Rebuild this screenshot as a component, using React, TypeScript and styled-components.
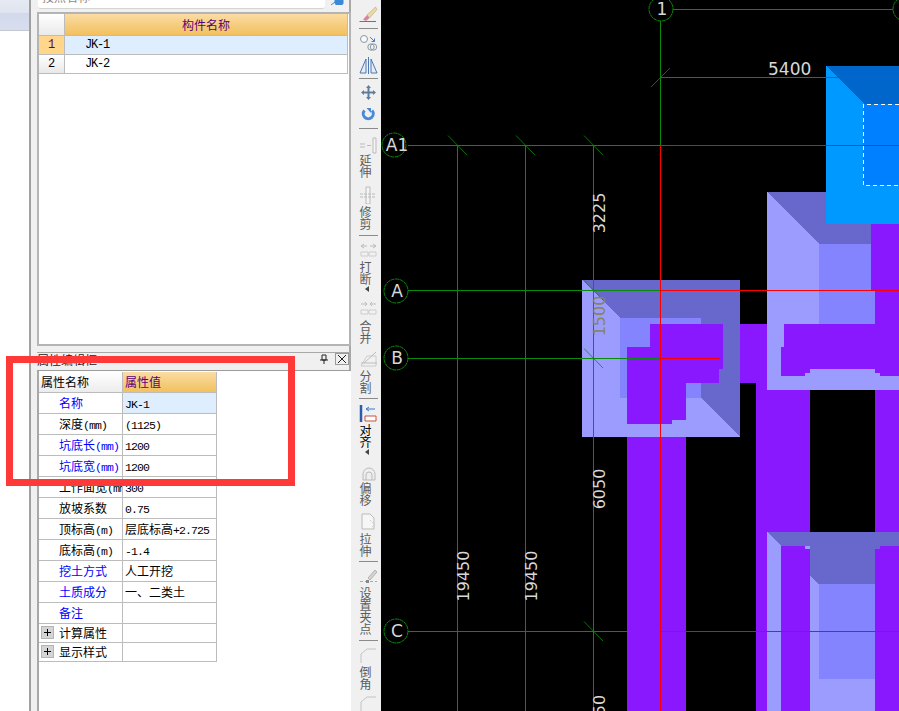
import React from "react";
import styled, { createGlobalStyle } from "styled-components";

const GlobalStyle = createGlobalStyle`
  html, body {
    margin: 0;
    padding: 0;
    background: #fff;
    overflow: hidden;
  }
  body {
    font-family: "Noto Sans CJK SC", "Liberation Sans", sans-serif;
    font-size: 12px;
  }
`;

const latin = `"Liberation Mono", "Noto Sans CJK SC", monospace`;

interface PropRow {
  name: string;
  value?: string;
  blue?: boolean;
  active?: boolean;
  expand?: boolean;
}

const propRows: PropRow[] = [
  { name: "名称", value: "JK-1", blue: true, active: true },
  { name: "深度(mm)", value: "(1125)" },
  { name: "坑底长(mm)", value: "1200", blue: true },
  { name: "坑底宽(mm)", value: "1200", blue: true },
  { name: "工作面宽(mm)", value: "300" },
  { name: "放坡系数", value: "0.75" },
  { name: "顶标高(m)", value: "层底标高+2.725" },
  { name: "底标高(m)", value: "-1.4" },
  { name: "挖土方式", value: "人工开挖", blue: true },
  { name: "土质成分", value: "一、二类土", blue: true },
  { name: "备注", value: "", blue: true },
  { name: "计算属性", expand: true },
  { name: "显示样式", expand: true },
];

function Mixed({ text }: { text: string }) {
  const parts = text.match(/[\x20-\x7e]+|[^\x20-\x7e]+/g) ?? [];
  return (
    <span>
      {parts.map((p, i) =>
        /^[\x20-\x7e]/.test(p) ? <LatinRun key={i}>{p}</LatinRun> : <span key={i}>{p}</span>
      )}
    </span>
  );
}

const Icons: Record<string, React.ReactNode> = {
  brush: (
    <>
      <path d="M16.5 1 L8 9 L10.5 12 L18 3.5 Z" fill="#ecd9a0" stroke="#b0a890" strokeWidth="0.6" />
      <path d="M4 13.5 L8 9 L10.5 12 L7 15 Z" fill="#d8859c" />
      <path d="M0.5 15.5 H17" stroke="#5a7896" strokeWidth="1" />
    </>
  ),
  circles: (
    <>
      <circle cx="5" cy="6" r="3.5" fill="#f8f8f8" stroke="#8a9aa8" />
      <circle cx="12" cy="14" r="3.2" fill="none" stroke="#8a9aa8" />
      <circle cx="14.5" cy="14" r="3.2" fill="none" stroke="#8a9aa8" />
      <path d="M11 4 L15.5 8.5 M15.5 5.5 V8.5 H12.5" stroke="#4a80c8" fill="none" />
    </>
  ),
  mirror: (
    <>
      <path d="M7 3 V17 H1 Z M12 3 V17 H18 Z" fill="#e4edf7" stroke="#4d78b0" />
      <path d="M9.5 1 V18" stroke="#4d78b0" />
    </>
  ),
  move: (
    <path
      d="M9.5 2 L12 5 H10.5 V8.5 H14 V7 L17 9.5 L14 12 V10.5 H10.5 V14 H12 L9.5 17 L7 14 H8.5 V10.5 H5 V12 L2 9.5 L5 7 V8.5 H8.5 V5 H7 Z"
      fill="#5f7e9e"
    />
  ),
  rotate: (
    <>
      <path d="M5.5 4.5 A5 5 0 1 0 13 4.5" fill="none" stroke="#4a88d8" strokeWidth="3" />
      <path d="M7.5 2 L12 2 L12 7 Z" fill="#4a88d8" />
    </>
  ),
  extend: (
    <>
      <path d="M14 2 H17 V17 H14 Z" fill="#f4f4f4" stroke="#bbb" />
      <path d="M1 8 H6 M1 11 H6 M8 9.5 H12" stroke="#bbb" />
    </>
  ),
  trim: (
    <>
      <path d="M7 1 H11 V18 H7 Z" fill="#f4f4f4" stroke="#bbb" />
      <path d="M1 8 H17 M1 11 H17" stroke="#bbb" strokeDasharray="3 1" />
    </>
  ),
  breakLine: (
    <>
      <path d="M2 5 H8 M11 5 H17 M5 3 L2 5 L5 7 M14 3 L17 5 L14 7" stroke="#bbb" fill="none" />
      <path d="M2 11 H9 V15 H2 Z M10 11 H17 V15 H10 Z" fill="#f2f2f2" stroke="#ccc" />
    </>
  ),
  merge: (
    <>
      <path d="M2 5 H8 M11 5 H17 M6 3 L8 5 L6 7 M13 3 L11 5 L13 7" stroke="#bbb" fill="none" />
      <path d="M2 11 H9 V15 H2 Z M10 11 H17 V15 H10 Z" fill="#f2f2f2" stroke="#ccc" />
    </>
  ),
  split: (
    <>
      <path d="M2 16 L8 6 H17 V16 Z" fill="#f2f2f2" stroke="#ccc" />
      <path d="M5 13 L17 2 M2 13 H18" stroke="#bbb" />
    </>
  ),
  align: (
    <>
      <path d="M2 1 V18" stroke="#2a5ca8" strokeWidth="2.5" />
      <path d="M6 12 H17 V17 H6 Z" fill="#fff" stroke="#c8503c" />
      <path d="M7 5 H16 M7 5 L10 3 M7 5 L10 7" stroke="#3a78d0" fill="none" />
    </>
  ),
  offset: (
    <>
      <path d="M4 15 V9 A6 6 0 0 1 16 9 V15 Z" fill="#eee" stroke="#bbb" />
      <path d="M7 15 V10 A3 3 0 0 1 13 10 V15" fill="none" stroke="#bbb" />
    </>
  ),
  stretch: (
    <>
      <path d="M3 2 H11 L15 6 V17 H3 Z" fill="#f6f6f6" stroke="#bbb" />
      <path d="M11 8 L16 13 L13 15" fill="none" stroke="#ccc" strokeDasharray="2 1" />
    </>
  ),
  grip: (
    <>
      <path d="M9 12 L16 4 L18 6 L11 14 Z" fill="#d4d4d4" stroke="#b4b4b4" />
      <path d="M1 15.5 H18" stroke="#aaa" strokeDasharray="3 2" />
      <rect x="7" y="14" width="3" height="3" fill="#888" />
    </>
  ),
  chamfer: <path d="M2 17 V8 L8 3 H17" fill="none" stroke="#c4c4c4" />,
};

interface ToolItem {
  icon: string;
  top: number;
  label?: string;
  labelGap?: number;
  arrow?: boolean;
  dark?: boolean;
  sep?: boolean;
}

const tools: ToolItem[] = [
  { icon: "brush", top: 6 },
  { icon: "", top: 4, sep: true },
  { icon: "circles", top: 4 },
  { icon: "mirror", top: 5 },
  { icon: "", top: 4, sep: true },
  { icon: "move", top: 4 },
  { icon: "rotate", top: 5 },
  { icon: "", top: 4, sep: true },
  { icon: "extend", top: 7, label: "延伸", labelGap: 0 },
  { icon: "trim", top: 8, label: "修剪", labelGap: 2 },
  { icon: "", top: 5, sep: true },
  { icon: "breakLine", top: 5, label: "打断", labelGap: 2, arrow: true },
  { icon: "merge", top: 7, label: "合并", labelGap: 3 },
  { icon: "split", top: 6, label: "分割", labelGap: 2 },
  { icon: "", top: 4, sep: true },
  { icon: "align", top: 5, label: "对齐", labelGap: 2, arrow: true, dark: true },
  { icon: "offset", top: 10, label: "偏移", labelGap: -1 },
  { icon: "stretch", top: 6, label: "拉伸", labelGap: 3 },
  { icon: "", top: 4, sep: true },
  { icon: "grip", top: 4, label: "设置夹点", labelGap: 3 },
  { icon: "", top: 5, sep: true },
  { icon: "chamfer", top: 5, label: "倒角", labelGap: 2 },
  { icon: "chamfer", top: 4 },
];

const GREEN = "#0a8a0a";
const RED = "#ff0000";

function HLine({ x1, x2, y, color }: { x1: number; x2: number; y: number; color: string }) {
  return <rect x={x1} y={y} width={x2 - x1} height={1} fill={color} />;
}

function VLine({ x, y1, y2, color }: { x: number; y1: number; y2: number; color: string }) {
  return <rect x={x} y={y1} width={1} height={y2 - y1} fill={color} />;
}

function AxisBubble({ x, y, label, dx = 1 }: { x: number; y: number; label: string; dx?: number }) {
  return (
    <g>
      <circle cx={x} cy={y} r={12} fill="#000" stroke={GREEN} strokeWidth={1} strokeDasharray="4 0.6" />
      <text x={x + dx} y={y + 6} fontSize={17} fill="#d8d8d8" textAnchor="middle" fontFamily="DejaVu Sans, sans-serif">
        {label}
      </text>
    </g>
  );
}

function DimText({ x, y, label, fill = "#d8d8d8" }: { x: number; y: number; label: string; fill?: string }) {
  return (
    <text
      transform={`translate(${x} ${y}) rotate(-90)`}
      fontSize={16}
      fill={fill}
      textAnchor="middle"
      fontFamily="DejaVu Sans, sans-serif"
    >
      {label}
    </text>
  );
}

function Tick({ x, y }: { x: number; y: number }) {
  return <path d={`M${x - 9.5} ${y - 10} L${x + 9.5} ${y + 9.5}`} stroke={GREEN} strokeWidth={0.8} />;
}

function CadDrawing() {
  const purple = "#8a18ff";
  const light = "#9c9cff";
  const dark = "#6868cc";
  const inner = "#8484ff";
  return (
    <CanvasSvg viewBox="381 0 518 711" width={518} height={711} shapeRendering="crispEdges">
      {/* column stems */}
      <rect x={627} y={430} width={59} height={281} fill={purple} />
      <rect x={756} y={383} width={54} height={328} fill={purple} />
      <rect x={875} y={385} width={24} height={326} fill={purple} />
      <rect x={740} y={324} width={30} height={59} fill={purple} />

      {/* footing A/B */}
      <rect x={582} y={280} width={158} height={157} fill={light} />
      <polygon points="582,280 740,280 740,437 701,398 701,318 620,318" fill={dark} />
      <rect x={620} y={318} width={81} height={80} fill={inner} />
      <polygon
        points="650,324 723,324 723,369 719,369 719,383 686,383 686,420 672,420 672,424 627,424 627,347 650,347"
        fill={purple}
      />

      {/* footing upper right */}
      <rect x={767} y={192} width={132} height={198} fill={light} />
      <polygon points="767,192 899,192 899,244 819,244" fill={dark} />
      <rect x={819} y={244} width={80} height={80} fill={inner} />
      <polygon points="871,224 899,224 899,290 871,290" fill={purple} />
      <polygon points="875,290 899,290 899,324 875,324" fill={purple} />
      <polygon
        points="784,324 899,324 899,376 880,376 880,373 875,373 875,369 810,369 810,373 805,373 805,376 781,376 781,347 784,347"
        fill={purple}
      />

      {/* footing lower right */}
      <rect x={767} y={532} width={132} height={179} fill={light} />
      <polygon points="767,532 899,532 899,584 819,584 810,576 810,546 781,546" fill={dark} />
      <rect x={819} y={584} width={56} height={95} fill={inner} />
      <polygon points="781,546 805,546 805,549 810,549 810,711 781,711" fill={purple} />
      <polygon points="875,549 880,549 880,546 899,546 899,711 875,711" fill={purple} />

      {/* blue footing */}
      <rect x={826} y={66} width={73} height={158} fill="#0099ff" />
      <polygon points="826,66 899,66 899,104 864,104" fill="#0066cc" />
      <rect x={863} y={104} width={36} height={81} fill="#0080ff" />
      <path d="M899 104.5 H863.5 V185.5 H899" fill="none" stroke="#fff" strokeWidth={1} strokeDasharray="4 3" />

      {/* grid lines */}
      <VLine x={457} y1={145} y2={711} color={GREEN} />
      <VLine x={525} y1={145} y2={711} color={GREEN} />
      <VLine x={593} y1={145} y2={711} color={GREEN} />
      <HLine x1={408} x2={660} y={145} color={GREEN} />
      <HLine x1={408} x2={660} y={290} color={GREEN} />
      <HLine x1={408} x2={660} y={358} color={GREEN} />
      <HLine x1={408} x2={660} y={631} color={GREEN} />
      <VLine x={660} y1={21} y2={145} color={GREEN} />
      <HLine x1={673} x2={893} y={9} color={GREEN} />
      <HLine x1={660} x2={899} y={77} color={GREEN} />

      {/* red reference lines */}
      <VLine x={660} y1={145} y2={711} color={RED} />
      <HLine x1={660} x2={899} y={145} color={RED} />
      <HLine x1={660} x2={899} y={290} color={RED} />
      <HLine x1={660} x2={720} y={358} color={RED} />
      <HLine x1={660} x2={899} y={631} color={RED} />

      <g shapeRendering="auto">
        <Tick x={593.5} y={145.5} />
        <Tick x={525.5} y={145.5} />
        <Tick x={457.5} y={145.5} />
        <Tick x={593.5} y={290.5} />
        <Tick x={593.5} y={358.5} />
        <Tick x={593.5} y={631.5} />
        <path d="M651 87 L670 68" stroke={GREEN} strokeWidth={0.8} />
        <AxisBubble x={394} y={145} label="A1" dx={3} />
        <AxisBubble x={396} y={291} label="A" />
        <AxisBubble x={396} y={358} label="B" />
        <AxisBubble x={396} y={631} label="C" />
        <AxisBubble x={661} y={9} label="1" />
        <AxisBubble x={905} y={9} label="" />
        <text x={768} y={75} fontSize={17} fill="#d8d8d8" fontFamily="DejaVu Sans, sans-serif">
          5400
        </text>
        <DimText x={605} y={213} label="3225" />
        <DimText x={605} y={316} label="1500" fill="#85855a" />
        <DimText x={605} y={489} label="6050" />
        <DimText x={469} y={576} label="19450" />
        <DimText x={537} y={576} label="19450" />
        <DimText x={605} y={705} label="50" />
      </g>
    </CanvasSvg>
  );
}

export default function App() {
  return (
    <>
      <GlobalStyle />
      <Page>
        <LeftSliver>
          <SliverHead />
          <SliverSub />
        </LeftSliver>

        <SidePanel>
          <SearchRow>
            <SearchInput>
              <span>按照名称</span>
            </SearchInput>
            <SearchIcon width="14" height="5" viewBox="0 0 14 5">
              <path d="M1 5 L5 2 M5 3 A4 3 0 0 0 13 2 V0 H5 Z" fill="#3a88d8" stroke="#3a88d8" />
            </SearchIcon>
          </SearchRow>

          <ListBox>
            <ListHeader>
              <ListCorner />
              <ListHeadCell>构件名称</ListHeadCell>
            </ListHeader>
            <ListRow>
              <ListIndex $active>1</ListIndex>
              <ListName $active>JK-1</ListName>
            </ListRow>
            <ListRow>
              <ListIndex>2</ListIndex>
              <ListName>JK-2</ListName>
            </ListRow>
          </ListBox>

          <PanelTitle>
            <span>属性编辑框</span>
            <TitleButtons>
              <TitleBtn>
                <svg width="10" height="10" viewBox="0 0 10 10">
                  <path d="M3 1 H7 V6 H3 Z M1 6 H9 M5 6 V10" fill="none" stroke="#222" />
                </svg>
              </TitleBtn>
              <TitleBtn>
                <svg width="10" height="10" viewBox="0 0 10 10">
                  <path d="M1 1 L9 9 M9 1 L1 9" stroke="#222" />
                </svg>
              </TitleBtn>
            </TitleButtons>
          </PanelTitle>

          <PropPanel>
            <PropGrid>
              <PropHeadName>属性名称</PropHeadName>
              <PropHeadValue>属性值</PropHeadValue>
              {propRows.map((r) => (
                <React.Fragment key={r.name}>
                  <PropName $blue={r.blue} $short={r.expand}>
                    {r.expand && <ExpandBox />}
                    <Mixed text={r.name} />
                  </PropName>
                  <PropValue $active={r.active} $short={r.expand}>
                    <Mixed text={r.value ?? ""} />
                  </PropValue>
                </React.Fragment>
              ))}
            </PropGrid>
          </PropPanel>
        </SidePanel>

        <Toolbar>
          {tools.map((t, i) =>
            t.sep ? (
              <ToolSep key={i} $top={t.top} />
            ) : (
              <ToolButton key={i} $top={t.top}>
                <svg width="19" height="18" viewBox="0 0 19 18">
                  {Icons[t.icon]}
                </svg>
                {t.label && (
                  <ToolLabel $gap={t.labelGap ?? 0} $dark={t.dark}>
                    {t.label}
                  </ToolLabel>
                )}
                {t.arrow && <ToolArrow />}
              </ToolButton>
            )
          )}
        </Toolbar>

        <Canvas>
          <CadDrawing />
        </Canvas>

        <RedMark />
      </Page>
    </>
  );
}

const Page = styled.div`
  position: relative;
  display: flex;
  width: 899px;
  height: 711px;
  overflow: hidden;
  background: #f0f0f0;
`;

const LeftSliver = styled.div`
  width: 29px;
  flex: none;
  background: #fff;
  border-right: 2px solid #a0a0a0;
`;

const SliverHead = styled.div`
  height: 13px;
  background: linear-gradient(#e6eaf3, #dfe4ef);
`;

const SliverSub = styled.div`
  height: 17px;
  background: linear-gradient(#d2d9ec, #d8deef);
  border-bottom: 1px solid #c4c8d0;
`;

const SidePanel = styled.div`
  width: 320px;
  flex: none;
  display: flex;
  flex-direction: column;
  padding-left: 6px;
  box-sizing: border-box;
  height: 711px;
  border-right: 2px solid #a8a8a8;
  margin-right: 4px;
`;

const LatinRun = styled.span`
  font-family: ${latin};
  font-size: 11.5px;
  letter-spacing: -0.9px;
`;

const SearchRow = styled.div`
  height: 9px;
  display: flex;
  align-items: flex-start;
  overflow: hidden;
  margin-bottom: 3px;
`;

const SearchInput = styled.div`
  width: 287px;
  height: 9px;
  margin-left: 1px;
  background: #fff;
  border-radius: 0 0 3px 3px;
  border-bottom: 1px solid #d4d4d4;
  box-sizing: border-box;
  overflow: hidden;
  color: #888;
  line-height: 12px;
  padding-left: 4px;

  span {
    display: block;
    margin-top: -9px;
  }
`;

const SearchIcon = styled.svg`
  margin-left: 5px;
`;

const ListBox = styled.div`
  height: 334px;
  background: #fff;
  border: 2px solid #b4b4b4;
  box-sizing: border-box;
  margin-right: -2px;
  font-size: 12px;
`;

const ListHeader = styled.div`
  display: grid;
  grid-template-columns: 26px 1fr;
  height: 21px;
  margin-right: 1px;
  border-bottom: 1px solid #bcbcbc;
`;

const ListCorner = styled.div`
  background: linear-gradient(#fff, #eaeaea);
  border-right: 1px solid #bcbcbc;
`;

const ListHeadCell = styled.div`
  background: linear-gradient(#fbdca4, #f2c05e);
  color: #5a0078;
  text-align: center;
  line-height: 21px;
  font-size: 12px;
  border-right: 1px solid #bcbcbc;
  box-sizing: border-box;
`;

const ListRow = styled.div`
  display: grid;
  grid-template-columns: 26px 1fr;
  height: 19px;
  margin-right: 1px;
  border-bottom: 1px solid #bcbcbc;
  box-sizing: border-box;
`;

const ListIndex = styled.div<{ $active?: boolean }>`
  background: ${(p) => (p.$active ? "#ffd68a" : "linear-gradient(#fff, #e8e8e8)")};
  color: ${(p) => (p.$active ? "#5a0078" : "#000")};
  font-family: ${latin};
  font-size: 12px;
  text-align: center;
  line-height: 18px;
  border-right: 1px solid #bcbcbc;
  box-sizing: border-box;
`;

const ListName = styled.div<{ $active?: boolean }>`
  background: ${(p) => (p.$active ? "#dfeeff" : "#fff")};
  color: #000;
  font-family: ${latin};
  font-size: 12px;
  letter-spacing: -1.2px;
  line-height: 18px;
  padding-left: 20px;
  border-right: 1px solid #bcbcbc;
`;

const PanelTitle = styled.div`
  height: 24px;
  box-sizing: border-box;
  margin-right: -2px;
  margin-top: 1px;
  padding-top: 6px;
  border-bottom: 1px solid #9c9c9c;
  display: flex;
  justify-content: space-between;
  color: #222;
  line-height: 13px;
  font-size: 12px;
  position: relative;

  &::before {
    content: "";
    position: absolute;
    left: 0;
    right: 0;
    top: 5px;
    height: 1px;
    background: #a8a8a8;
  }
`;

const TitleButtons = styled.div`
  display: flex;
  gap: 4px;
  margin-right: 2px;
`;

const TitleBtn = styled.div`
  width: 14px;
  height: 12px;
  display: flex;
  align-items: center;
  justify-content: center;
  border: 1px solid #9a9a9a;
  box-sizing: border-box;

  &:first-child {
    border-color: transparent;
  }
`;

const PropPanel = styled.div`
  flex: 1;
  background: #fff;
  border-left: 2px solid #a8a8a8;
  margin-right: -2px;
  padding-top: 1px;
`;

const PropGrid = styled.div`
  display: grid;
  grid-template-columns: 84px 94px;
  width: 178px;
  font-size: 12px;
`;

const PropHeadName = styled.div`
  height: 21px;
  box-sizing: border-box;
  background: linear-gradient(#fff, #ececec);
  border-right: 1px solid #bcbcbc;
  border-bottom: 1px solid #bcbcbc;
  line-height: 20px;
  padding-left: 2px;
  color: #000;
`;

const PropHeadValue = styled.div`
  height: 21px;
  box-sizing: border-box;
  background: linear-gradient(#fbdca4, #f2c05e);
  color: #5a0078;
  border-right: 1px solid #bcbcbc;
  border-bottom: 1px solid #bcbcbc;
  line-height: 20px;
  padding-left: 2px;
`;

const PropName = styled.div<{ $blue?: boolean; $short?: boolean }>`
  height: ${(p) => (p.$short ? 19 : 21)}px;
  box-sizing: border-box;
  line-height: ${(p) => (p.$short ? 18 : 20)}px;
  padding-left: 20px;
  position: relative;
  color: ${(p) => (p.$blue ? "#0000ff" : "#000")};
  border-right: 1px solid #bcbcbc;
  border-bottom: 1px solid #bcbcbc;
  overflow: hidden;
  white-space: nowrap;
`;

const ExpandBox = styled.span`
  position: absolute;
  left: 2px;
  top: 2px;
  width: 11px;
  height: 11px;
  border: 1px solid #b4b4b4;
  background:
    linear-gradient(#000, #000) center / 7px 1px no-repeat,
    linear-gradient(#000, #000) center / 1px 7px no-repeat,
    #d4d4d4;
`;

const PropValue = styled.div<{ $active?: boolean; $short?: boolean }>`
  height: ${(p) => (p.$short ? 19 : 21)}px;
  box-sizing: border-box;
  background: ${(p) => (p.$active ? "#dfeeff" : "#fff")};
  border-right: 1px solid #bcbcbc;
  border-bottom: 1px solid #bcbcbc;
  color: #000;
  white-space: pre;
  line-height: 19px;
  padding-left: 2px;
  overflow: hidden;
`;

const Toolbar = styled.div`
  width: 26px;
  flex: none;
  display: flex;
  flex-direction: column;
  align-items: center;
  background: #f0f0f0;
  height: 711px;
  overflow: hidden;
`;

const ToolSep = styled.div<{ $top: number }>`
  width: 19px;
  height: 1px;
  flex: none;
  background: #8a8a8a;
  margin-top: ${(p) => p.$top}px;
`;

const ToolButton = styled.div<{ $top: number }>`
  display: flex;
  flex: none;
  flex-direction: column;
  align-items: center;
  margin-top: ${(p) => p.$top}px;
`;

const ToolLabel = styled.div<{ $gap: number; $dark?: boolean }>`
  width: 12px;
  font-size: 12px;
  line-height: 12px;
  margin-top: ${(p) => p.$gap}px;
  margin-right: 5px;
  color: ${(p) => (p.$dark ? "#000" : "#5c5c5c")};
  word-break: break-all;
`;

const ToolArrow = styled.div`
  width: 0;
  height: 0;
  margin-top: 1px;
  margin-right: 3px;
  border-top: 3px solid transparent;
  border-bottom: 3px solid transparent;
  border-right: 4px solid #444;
`;

const Canvas = styled.div`
  flex: 1;
  background: #000;
  height: 711px;
`;

const CanvasSvg = styled.svg`
  display: block;
`;

const RedMark = styled.div`
  position: absolute;
  left: 6px;
  top: 356px;
  width: 289px;
  height: 130px;
  box-sizing: border-box;
  border: 7px solid #ff3838;
  pointer-events: none;
`;
